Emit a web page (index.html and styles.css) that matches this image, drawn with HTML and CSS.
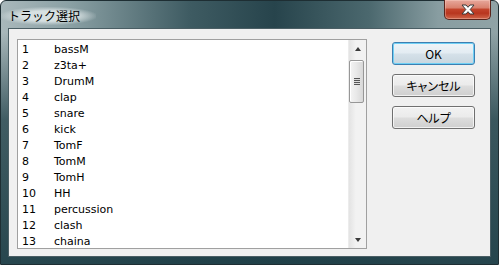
FILE: index.html
```html
<!DOCTYPE html>
<html lang="ja">
<head>
  <meta charset="UTF-8">
  <title>トラック選択</title>
  <link rel="stylesheet" href="styles.css">
</head>
<body>
  <div class="window">
    <div class="titlebar">
      <span class="title">トラック選択</span>
      <button class="close" aria-label="閉じる">
        <svg width="14" height="11" viewBox="0 0 14 11">
          <path d="M1 1h4l2 2.3 2-2.3h4l-3.8 4.5 3.8 4.5h-4l-2-2.3-2 2.3h-4l3.8-4.5z" fill="#fff" stroke="#3a3a3a" stroke-width="1" stroke-linejoin="round"/>
        </svg>
      </button>
    </div>
    <div class="client">
      <div class="listbox">
        <ul class="items">
          <li><span class="num">1</span><span>bassM</span></li>
          <li><span class="num">2</span><span>z3ta+</span></li>
          <li><span class="num">3</span><span>DrumM</span></li>
          <li><span class="num">4</span><span>clap</span></li>
          <li><span class="num">5</span><span>snare</span></li>
          <li><span class="num">6</span><span>kick</span></li>
          <li><span class="num">7</span><span>TomF</span></li>
          <li><span class="num">8</span><span>TomM</span></li>
          <li><span class="num">9</span><span>TomH</span></li>
          <li><span class="num">10</span><span>HH</span></li>
          <li><span class="num">11</span><span>percussion</span></li>
          <li><span class="num">12</span><span>clash</span></li>
          <li><span class="num">13</span><span>chaina</span></li>
        </ul>
        <div class="scrollbar">
          <div class="arrow up"></div>
          <div class="track">
            <div class="thumb"><span class="grip"></span></div>
          </div>
          <div class="arrow down"></div>
        </div>
      </div>
      <div class="buttons">
        <button class="btn default">OK</button>
        <button class="btn">キャンセル</button>
        <button class="btn">ヘルプ</button>
      </div>
    </div>
  </div>
</body>
</html>
```

FILE: styles.css
```css
body {
  margin: 0;
  font-family: "DejaVu Sans", sans-serif;
}
.window {
  width: 499px;
  height: 265px;
  box-sizing: border-box;
  display: flex;
  flex-direction: column;
  border: 1px solid #1e2e33;
  border-radius: 6px 6px 0 0;
  background:
    linear-gradient(to bottom, rgba(0,0,0,0) 0%, rgba(0,0,0,0) 12%, rgba(30,62,70,0.75) 45%, rgba(32,64,72,0.95) 100%),
    linear-gradient(to right, #a9b8bb 0%, #8aa0a4 14%, #3e5b62 38%, #27444c 55%, #4b686e 74%, #889da1 88%, #90a3a6 100%);
}
.titlebar {
  height: 27px;
  display: flex;
  justify-content: space-between;
  align-items: flex-start;
}
.title {
  margin: 6px 0 0 0;
  padding: 0 16px 0 7px;
  font-family: "Noto Sans CJK JP", sans-serif;
  font-size: 12px;
  line-height: 18px;
  color: #000;
  background: radial-gradient(ellipse at center, rgba(222,230,231,0.9) 40%, rgba(222,230,231,0) 74%);
}
.close {
  width: 47px;
  height: 20px;
  margin: -1px 7px 0 0;
  padding: 0;
  display: flex;
  align-items: center;
  justify-content: center;
  border: 1px solid #5a241c;
  border-top: none;
  border-radius: 0 0 5px 5px;
  background: linear-gradient(to bottom, #e7a89c 0%, #d9826f 40%, #c2432b 50%, #b8361f 70%, #d0664b 100%);
  box-shadow: inset 0 0 0 1px rgba(255,220,210,0.35);
}
.client {
  flex: 1;
  margin: 0 7px 7px;
  border: 1px solid #4a5e64;
  background: #f0f0f0;
  display: flex;
  align-items: flex-start;
  padding: 10px 0 0 8px;
}
.listbox {
  width: 350px;
  height: 210px;
  box-sizing: border-box;
  border: 1px solid #a0a0a0;
  background: #fff;
  display: flex;
}
.items {
  flex: 1;
  list-style: none;
  margin: 0;
  padding: 2px 0 0 4px;
  font-size: 11px;
  color: #000;
}
.items li {
  height: 16px;
  line-height: 16px;
  display: flex;
}
.num {
  width: 32px;
}
.scrollbar {
  width: 17px;
  display: flex;
  flex-direction: column;
  background: linear-gradient(to right, #e3e3e3, #f2f2f2 40%, #f2f2f2);
  border-left: 1px solid #ececec;
}
.arrow {
  height: 17px;
  display: flex;
  align-items: center;
  justify-content: center;
}
.arrow::before {
  content: "";
  border-left: 3.5px solid transparent;
  border-right: 3.5px solid transparent;
}
.arrow.up::before {
  border-bottom: 4px solid #3a3a3a;
}
.arrow.down::before {
  border-top: 4px solid #3a3a3a;
}
.track {
  flex: 1;
  padding: 3px 0 0 0;
}
.thumb {
  width: 15px;
  height: 43px;
  box-sizing: border-box;
  border: 1px solid #979797;
  border-radius: 2px;
  background: linear-gradient(to right, #f4f4f4, #e8e8e8 50%, #d8d8d8);
  box-shadow: inset 1px 1px 0 #fff;
  display: flex;
  align-items: center;
  justify-content: center;
}
.grip {
  width: 6px;
  height: 7px;
  background: repeating-linear-gradient(to bottom, #555 0, #555 1px, #ddd 1px, #ddd 2px);
}
.buttons {
  margin: 3px 0 0 25px;
  display: flex;
  flex-direction: column;
  gap: 9px;
}
.btn {
  width: 83px;
  height: 23px;
  padding: 0;
  border: 1px solid #707070;
  border-radius: 3px;
  font-family: "Noto Sans CJK JP", sans-serif;
  font-size: 12px;
  font-feature-settings: "palt";
  color: #000;
  background: linear-gradient(to bottom, #f2f2f2 0%, #ebebeb 48%, #dddddd 52%, #cfcfcf 100%);
  box-shadow: inset 0 0 0 1px rgba(255,255,255,0.7);
}
.btn.default {
  border-color: #3c7fb1;
  background: linear-gradient(to bottom, #eef4f8 0%, #e3ecf2 48%, #d5e1e9 52%, #c8d6df 100%);
  box-shadow: inset 0 0 0 1px #6fd0f5;
}
```
